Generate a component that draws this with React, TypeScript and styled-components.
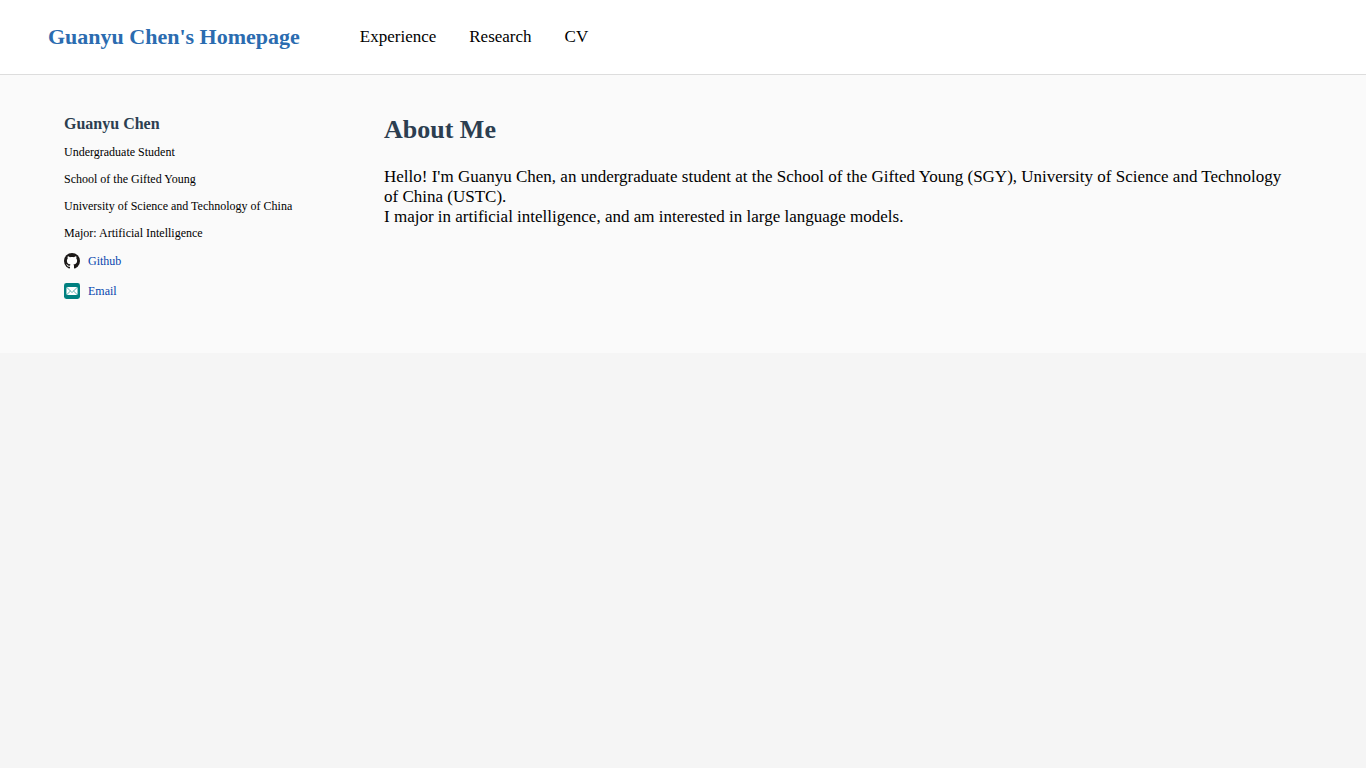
import React from "react";
import styled, { createGlobalStyle } from "styled-components";

const GlobalStyle = createGlobalStyle`
  * { box-sizing: border-box; }
  body {
    margin: 0;
    background: #f5f5f5;
    color: #000;
    font-family: "Liberation Serif", "Times New Roman", serif;
  }
  h1, h2, p, ul { margin: 0; padding: 0; }
`;

const Header = styled.header`
  display: flex;
  align-items: center;
  gap: 60px;
  padding: 24px 48px;
  background: #fff;
  border-bottom: 1px solid #ddd;
`;

const SiteTitle = styled.a`
  color: #2b6cb0;
  font-size: 22px;
  line-height: 26px;
  font-weight: bold;
  text-decoration: none;
`;

const Nav = styled.nav`
  display: flex;
  gap: 33px;
`;

const NavLink = styled.a`
  color: #000;
  font-size: 17px;
  line-height: 20px;
  text-decoration: none;
`;

const Content = styled.div`
  display: flex;
  gap: 60px;
  padding: 40px 48px;
  background: #fafafa;
`;

const Sidebar = styled.aside`
  flex: 0 0 260px;
  padding: 0 0 14px 16px;
  font-size: 12px;
  line-height: 14px;
`;

const Name = styled.h2`
  margin-bottom: 12px;
  color: #2c3e50;
  font-size: 16px;
  line-height: 18px;
`;

const Details = styled.div`
  display: flex;
  flex-direction: column;
  gap: 13px;
  margin-bottom: 13px;
`;

const Contacts = styled.ul`
  display: flex;
  flex-direction: column;
  gap: 14px;
  list-style: none;
`;

const ContactLink = styled.a`
  display: flex;
  align-items: center;
  gap: 8px;
  height: 16px;
  color: #0645ad;
  text-decoration: none;
`;

const Main = styled.main`
  flex: 1;
  min-width: 0;
  padding: 0 24px 0 16px;
`;

const Heading = styled.h1`
  margin-bottom: 22px;
  color: #2c3e50;
  font-size: 26px;
  line-height: 30px;
`;

const Paragraph = styled.p`
  font-size: 17px;
  line-height: 20px;
`;

const details = [
  "Undergraduate Student",
  "School of the Gifted Young",
  "University of Science and Technology of China",
  "Major: Artificial Intelligence",
];

const GithubIcon = () => (
  <svg width="16" height="16" viewBox="0 0 512 512" aria-hidden="true">
    <circle cx="256" cy="256" r="256" fill="#1b1817" />
    <path
      fill="#fff"
      d="M335 499c14 0 12 17 12 17H165s-2-17 12-17c13 0 16-6 16-12l-1-50c-71 16-86-28-86-28-12-30-28-37-28-37-24-16 1-16 1-16 26 2 40 26 40 26 22 39 59 28 74 22 2-17 9-28 16-35-57-6-116-28-116-126 0-28 10-51 26-69-3-6-11-32 3-67 0 0 21-7 70 26 42-12 86-12 128 0 49-33 70-26 70-26 14 35 6 61 3 67 16 18 26 41 26 69 0 98-60 120-117 126 10 8 18 24 18 48l-1 70c0 6 3 13 16 13z"
    />
  </svg>
);

const MailIcon = () => (
  <svg width="16" height="16" viewBox="0 0 512 512" aria-hidden="true">
    <rect width="512" height="512" rx="77" fill="#008080" />
    <rect width="356" height="256" x="78" y="128" rx="30" fill="#fff" />
    <path
      fill="none"
      stroke="#008080"
      strokeWidth="20"
      d="M434 128L269 292c-7 8-19 8-26 0L78 128m0 256l129-128m227 128L305 256"
    />
  </svg>
);

export default function App() {
  return (
    <>
      <GlobalStyle />
      <Header>
        <SiteTitle href="#">Guanyu Chen's Homepage</SiteTitle>
        <Nav>
          <NavLink href="#experience">Experience</NavLink>
          <NavLink href="#research">Research</NavLink>
          <NavLink href="#cv">CV</NavLink>
        </Nav>
      </Header>
      <Content>
        <Sidebar>
          <Name>Guanyu Chen</Name>
          <Details>
            {details.map((text) => (
              <p key={text}>{text}</p>
            ))}
          </Details>
          <Contacts>
            <li><ContactLink href="#github"><GithubIcon />Github</ContactLink></li>
            <li><ContactLink href="#email"><MailIcon />Email</ContactLink></li>
          </Contacts>
        </Sidebar>
        <Main>
          <Heading>About Me</Heading>
          <Paragraph>
            Hello! I'm Guanyu Chen, an undergraduate student at the School of the Gifted Young (SGY), University of Science and Technology of China (USTC).
          </Paragraph>
          <Paragraph>I major in artificial intelligence, and am interested in large language models.</Paragraph>
        </Main>
      </Content>
    </>
  );
}
